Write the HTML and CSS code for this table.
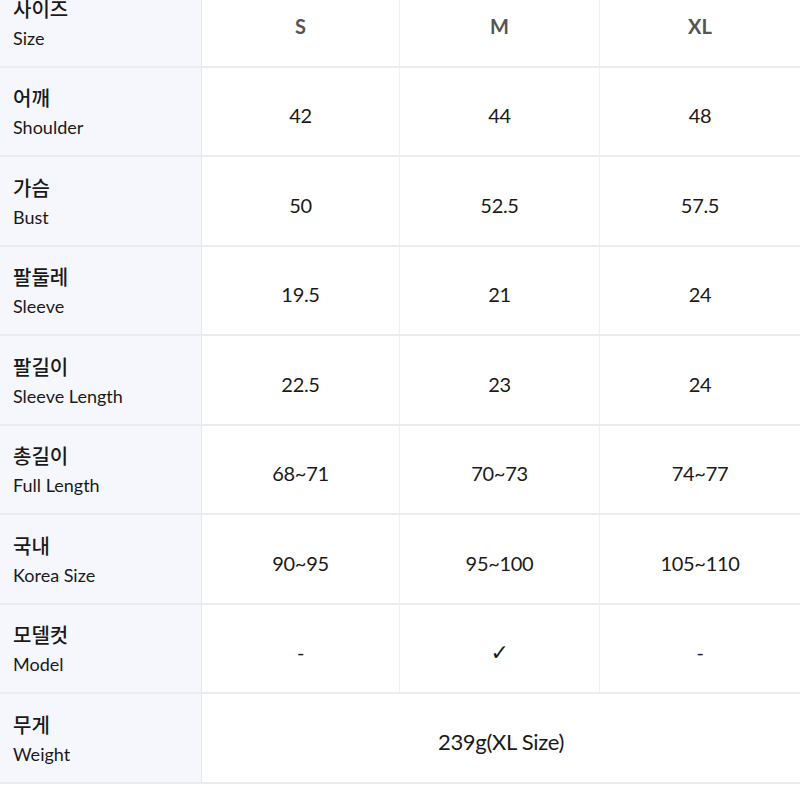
FILE: index.html
```html
<!DOCTYPE html>
<html lang="ko">
<head>
<meta charset="utf-8">
<link rel="stylesheet" href="styles.css">
</head>
<body>
<div class="table">
  <div class="row head">
    <div class="label"><span class="ko">사이즈</span><span class="en">Size</span></div>
    <div class="val">S</div><div class="val">M</div><div class="val">XL</div>
  </div>
  <div class="row">
    <div class="label"><span class="ko">어깨</span><span class="en">Shoulder</span></div>
    <div class="val">42</div><div class="val">44</div><div class="val">48</div>
  </div>
  <div class="row">
    <div class="label"><span class="ko">가슴</span><span class="en">Bust</span></div>
    <div class="val">50</div><div class="val">52.5</div><div class="val">57.5</div>
  </div>
  <div class="row">
    <div class="label"><span class="ko">팔둘레</span><span class="en">Sleeve</span></div>
    <div class="val">19.5</div><div class="val">21</div><div class="val">24</div>
  </div>
  <div class="row">
    <div class="label"><span class="ko">팔길이</span><span class="en">Sleeve Length</span></div>
    <div class="val">22.5</div><div class="val">23</div><div class="val">24</div>
  </div>
  <div class="row">
    <div class="label"><span class="ko">총길이</span><span class="en">Full Length</span></div>
    <div class="val">68~71</div><div class="val">70~73</div><div class="val">74~77</div>
  </div>
  <div class="row">
    <div class="label"><span class="ko">국내</span><span class="en">Korea Size</span></div>
    <div class="val">90~95</div><div class="val">95~100</div><div class="val">105~110</div>
  </div>
  <div class="row">
    <div class="label"><span class="ko">모델컷</span><span class="en">Model</span></div>
    <div class="val">-</div><div class="val check">✓</div><div class="val">-</div>
  </div>
  <div class="row">
    <div class="label"><span class="ko">무게</span><span class="en">Weight</span></div>
    <div class="val span3">239g(XL Size)</div>
  </div>
</div>
</body>
</html>
```

FILE: styles.css
```css
* { box-sizing: border-box; }
html, body { margin: 0; padding: 0; background: #fff; }
body {
  font-family: Lato, "Noto Sans CJK KR", sans-serif;
  color: #1a1a1a;
}
.table {
  margin-top: -22px;
  width: 800px;
}
.row {
  display: grid;
  grid-template-columns: 202px 198px 200px 200px;
  height: 89.5px;
  border-bottom: 2px solid #ececef;
}
.label {
  background: #f6f7fc;
  border-right: 1px solid #e6e7ec;
  display: flex;
  flex-direction: column;
  justify-content: center;
  padding-left: 13px;
  padding-top: 2px;
}
.ko {
  font-family: "Noto Sans CJK KR", sans-serif;
  font-weight: 500;
  font-size: 20px;
  line-height: 30px;
  color: #1a1a1a;
}
.en {
  font-size: 18px;
  line-height: 28px;
  color: #1a1a1a;
}
.val {
  display: flex;
  align-items: center;
  justify-content: center;
  font-size: 20px;
  letter-spacing: -0.3px;
  padding-top: 8px;
  border-right: 1px solid #f0f0f2;
}
.val:last-child { border-right: none; }
.head .val {
  font-weight: 700;
  color: #555;
  letter-spacing: 0;
}
.check { font-family: "DejaVu Sans", sans-serif; font-size: 22px; }
.span3 { grid-column: 2 / 5; font-size: 22px; }
```
